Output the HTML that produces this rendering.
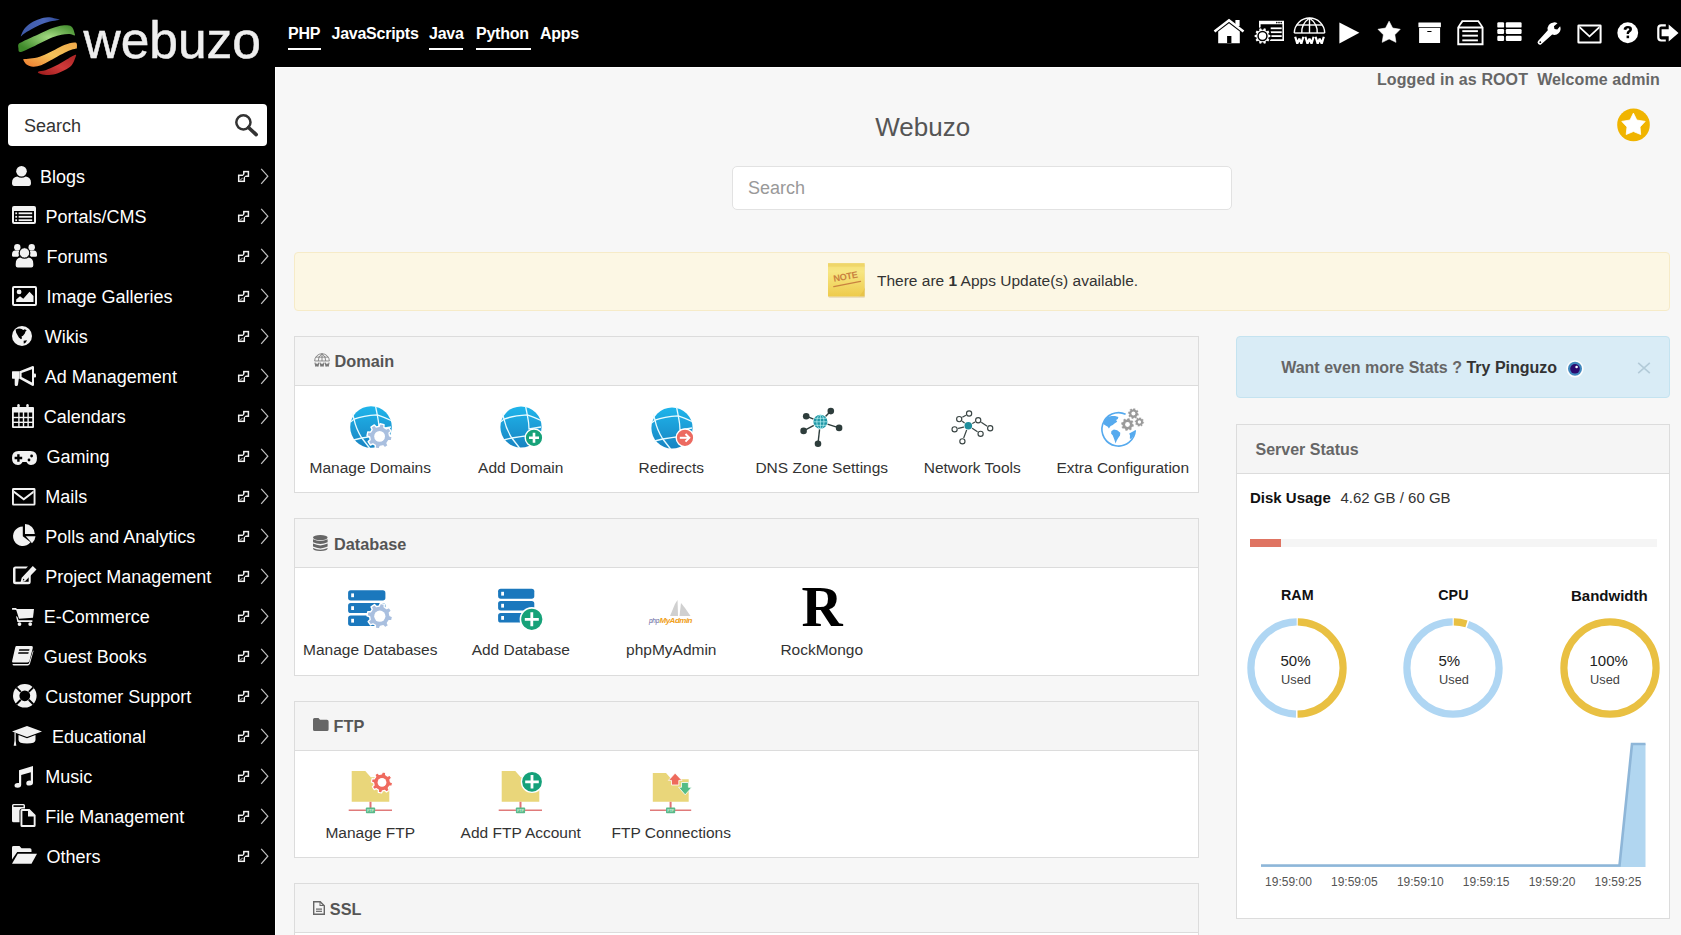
<!DOCTYPE html>
<html><head><meta charset="utf-8">
<style>
*{margin:0;padding:0;box-sizing:border-box}
html,body{width:1681px;height:935px;overflow:hidden;background:#f7f7f7;font-family:"Liberation Sans",sans-serif}
.a{position:absolute;overflow:visible}
.t{position:absolute;white-space:nowrap;line-height:1}
.nav{color:#fff;font-weight:bold;letter-spacing:-0.25px}
.ul{position:absolute;height:2px;background:#fff;top:48px}
.si{color:#fff;font-size:18px}
.panel{position:absolute;left:294px;width:905px;background:#fff;border:1px solid #dcdcdc}
.ph{height:49px;background:#f5f5f5;border-bottom:1px solid #dcdcdc}
.lbl{position:absolute;width:150px;text-align:center;font-size:15.5px;color:#333;line-height:1;white-space:nowrap}
</style></head><body>
<div class="a" style="left:0;top:0;width:1681px;height:67px;background:#000"></div>
<div class="a" style="left:0;top:67px;width:275px;height:868px;background:#000"></div>
<div class="a" style="left:275px;top:67px;width:1406px;height:868px;background:#f7f7f7;border-top:1px solid #fff;border-left:1px solid #fff"></div>

<svg class="a" style="left:12px;top:12px" width="70" height="68" viewBox="0 0 962 935"><defs><linearGradient id="lb" x1="0" y1="0" x2="1" y2="0"><stop offset="0" stop-color="#3e5aa8"/><stop offset="0.6" stop-color="#4a66b8"/><stop offset="1" stop-color="#2c4590"/></linearGradient><radialGradient id="lg" cx="0.55" cy="0.45" r="0.6"><stop offset="0" stop-color="#a6dc84"/><stop offset="1" stop-color="#3f8a2a"/></radialGradient><linearGradient id="lo" x1="0" y1="1" x2="1" y2="0"><stop offset="0" stop-color="#ef7a2e"/><stop offset="0.5" stop-color="#f3c35a"/><stop offset="1" stop-color="#f0a84a"/></linearGradient><linearGradient id="lr" x1="0" y1="1" x2="1" y2="0"><stop offset="0" stop-color="#9a1a1a"/><stop offset="0.5" stop-color="#d03a3a"/><stop offset="1" stop-color="#a82424"/></linearGradient></defs><path fill="url(#lb)" d="M125 320C132 303 148 258 170 230C192 202 225 172 260 150C295 128 340 108 380 95C420 82 457 71 500 72C543 73 617 94 640 100C663 106 660 105 640 110C620 115 563 121 520 132C477 143 423 160 380 178C337 196 297 221 260 242C223 263 182 287 160 302C138 317 131 329 125 332C119 335 118 337 125 320Z"/><path fill="url(#lg)" d="M90 440C100 424 122 419 150 405C178 391 218 374 260 355C302 336 357 310 400 290C443 270 480 251 520 235C560 219 600 204 640 195C680 186 728 180 760 183C792 186 813 192 830 212C847 232 857 282 862 300C867 318 872 322 860 322C848 322 820 304 790 302C760 300 718 304 680 312C642 320 603 330 560 347C517 364 467 390 420 412C373 434 322 462 280 482C238 502 200 521 170 532C140 543 114 553 100 548C86 543 90 518 88 500C86 482 80 456 90 440Z"/><path fill="url(#lo)" d="M160 650C175 646 213 646 250 640C287 634 335 629 380 615C425 601 473 578 520 555C567 532 615 501 660 480C705 459 753 440 790 430C827 420 865 413 882 423C899 433 892 477 892 490C892 503 899 495 880 502C861 509 817 517 780 532C743 547 703 569 660 592C617 615 563 649 520 672C477 695 438 719 400 732C362 745 323 754 290 752C257 750 222 737 200 722C178 707 165 674 158 662C151 650 145 654 160 650Z"/><path fill="url(#lr)" d="M360 820C373 812 420 813 460 800C500 787 553 763 600 740C647 717 695 685 740 660C785 635 851 591 872 588C893 585 875 616 866 640C857 664 844 705 820 732C796 759 757 782 720 802C683 822 642 841 600 852C558 863 507 868 470 867C433 866 398 855 380 847C362 839 347 828 360 820Z"/></svg>
<div class="t" style="left:83.5px;top:14.6px;font-size:51.5px;color:#eeeeee;-webkit-text-stroke:0.5px #eee">webuzo</div>
<div class="t nav" style="left:288.00px;top:26.06px;font-size:16px;">PHP</div>
<div class="t nav" style="left:331.50px;top:26.06px;font-size:16px;">JavaScripts</div>
<div class="t nav" style="left:429.00px;top:26.06px;font-size:16px;">Java</div>
<div class="t nav" style="left:476.00px;top:26.06px;font-size:16px;">Python</div>
<div class="t nav" style="left:540.00px;top:26.06px;font-size:16px;">Apps</div>
<div class="ul" style="left:288px;width:33px"></div><div class="ul" style="left:429px;width:34px"></div><div class="ul" style="left:476px;width:55px"></div>
<svg class="a" style="left:1213.0px;top:19.0px" width="32.0" height="26.0" viewBox="0 0 32.0 26.0" fill="#fff"><path fill="none" stroke="#fff" stroke-width="2.6" d="M1.5 12.5L16 1.3L30.5 12.5"/><rect x="22.4" y="1" width="4.2" height="6" /><path fill-rule="evenodd" d="M5.2 12.5L16 4.3L26.8 12.5V24.3H5.2ZM14.1 17.1V24.5H18.4V17.1Z"/></svg>
<svg class="a" style="left:1254.0px;top:20.0px" width="31.0" height="25.0" viewBox="0 0 31.0 25.0" fill="#fff"><path fill-rule="evenodd" d="M5 0.8H30V21H11.5V19.3H28.4V4.3H6.6V8.5H5Z"/><circle cx="22.8" cy="2.6" r="0.8" fill="#000"/><circle cx="25" cy="2.6" r="0.8" fill="#000"/><circle cx="27.2" cy="2.6" r="0.8" fill="#000"/><rect x="16.7" y="7.4" width="11" height="1.8"/><rect x="16.7" y="11.3" width="11" height="1.8"/><rect x="16.7" y="15.2" width="11" height="1.8"/><circle cx="8.5" cy="16" r="9" fill="#000"/><path d="M14.67 14.72L16.34 15.01L16.34 16.99L14.67 17.28L14.24 18.59L15.42 19.81L14.26 21.41L12.74 20.66L11.62 21.47L11.86 23.15L9.98 23.76L9.19 22.26L7.81 22.26L7.02 23.76L5.14 23.15L5.38 21.47L4.26 20.66L2.74 21.41L1.58 19.81L2.76 18.59L2.33 17.28L0.66 16.99L0.66 15.01L2.33 14.72L2.76 13.41L1.58 12.19L2.74 10.59L4.26 11.34L5.38 10.53L5.14 8.85L7.02 8.24L7.81 9.74L9.19 9.74L9.98 8.24L11.86 8.85L11.62 10.53L12.74 11.34L14.26 10.59L15.42 12.19L14.24 13.41Z"/><circle cx="8.5" cy="16" r="5.2" fill="#000"/><circle cx="8.5" cy="16" r="3.7"/></svg>
<svg class="a" style="left:1293.0px;top:17.0px" width="33.0" height="29.0" viewBox="0 0 33.0 29.0" fill="#fff"><g fill="none" stroke="#fff" stroke-width="1.4"><path d="M1.3 16A15.2 15 0 0 1 31.7 16"/><path d="M1.3 16H31.7"/><path d="M3.8 8H29.2"/><path d="M16.5 1V16"/><path d="M16.5 1Q8.2 7 8.8 16"/><path d="M16.5 1Q24.8 7 24.2 16"/></g><g fill="none" stroke="#fff" stroke-width="2.2" stroke-linejoin="bevel"><path d="M2.2 19.8L4.3 26.6L6.3 21.6L8.3 26.6L10.4 19.8"/><path d="M12.4 19.8L14.5 26.6L16.5 21.6L18.5 26.6L20.6 19.8"/><path d="M22.6 19.8L24.7 26.6L26.7 21.6L28.7 26.6L30.8 19.8"/></g></svg>
<svg class="a" style="left:1338.5px;top:21.5px" width="21.0" height="22.0" viewBox="0 0 21.0 22.0" fill="#fff"><path d="M0.4 0.4L20.4 10.7L0.4 21.4Z"/></svg>
<svg class="a" style="left:1376.5px;top:20.5px" width="24.0" height="22.0" viewBox="0 0 24.0 22.0" fill="#fff"><path stroke="#fff" stroke-width="0.6" stroke-linejoin="round" d="M12.10 0.20L15.63 7.05L23.23 8.28L17.81 13.75L18.98 21.37L12.10 17.90L5.22 21.37L6.39 13.75L0.97 8.28L8.57 7.05Z"/></svg>
<svg class="a" style="left:1417.5px;top:21.8px" width="23.5" height="21.5" viewBox="0 0 23.5 21.5" fill="#fff"><rect x="0.4" y="0.4" width="22.5" height="4.8" rx="0.4"/><path fill-rule="evenodd" d="M1.1 6.1H22.1V21.1H1.1ZM9.3 9V10.1H13.5V9Z"/></svg>
<svg class="a" style="left:1456.5px;top:19.8px" width="27.0" height="25.5" viewBox="0 0 27.0 25.5" fill="#fff"><path fill-rule="evenodd" d="M4.8 0.3H21.8L26.5 7.2V25.2H0.3V7.2ZM6 2L2.7 6.6H24.1L20.8 2ZM2.2 8.4V23.2H24.6V8.4Z"/><rect x="5.3" y="10.2" width="15.6" height="1.9"/><rect x="5.3" y="14.7" width="15.6" height="1.9"/><rect x="5.3" y="19.4" width="15.6" height="1.9"/></svg>
<svg class="a" style="left:1496.5px;top:22.0px" width="25.0" height="19.5" viewBox="0 0 25.0 19.5" fill="#fff"><rect x="0.3" y="0.2" width="6.8" height="5.4" rx="1.2"/><rect x="8.8" y="0.2" width="15.8" height="5.4" rx="1.2"/><rect x="0.3" y="7" width="6.8" height="5" rx="1.2"/><rect x="8.8" y="7" width="15.8" height="5" rx="1.2"/><rect x="0.3" y="13.8" width="6.8" height="5.2" rx="1.2"/><rect x="8.8" y="13.8" width="15.8" height="5.2" rx="1.2"/></svg>
<svg class="a" style="left:1537.0px;top:21.5px" width="23.5" height="23.0" viewBox="0 0 23.5 23.0" fill="#fff"><path fill-rule="evenodd" d="M16.6 0.4A6.3 6.3 0 0 1 20.5 1.3L16.9 4.2L17.5 7L20.3 7.6L23.1 4.3A6.3 6.3 0 0 1 15.2 12.6L4.3 22.2Q2.8 23.3 1.3 22Q-0.2 20.3 1.1 18.9L10.8 8.3A6.3 6.3 0 0 1 16.6 0.4ZM3.3 19.3A0.9 0.9 0 1 0 3.3 21.1A0.9 0.9 0 1 0 3.3 19.3Z"/></svg>
<svg class="a" style="left:1576.5px;top:23.5px" width="25.0" height="20.0" viewBox="0 0 25.0 20.0" fill="#fff"><path fill-rule="evenodd" d="M1.8 0.4H23.2Q24.6 0.4 24.6 1.8V18.2Q24.6 19.6 23.2 19.6H1.8Q0.4 19.6 0.4 18.2V1.8Q0.4 0.4 1.8 0.4ZM2.4 2.4V17.6H22.6V2.4Z"/><path d="M2.4 1.8L12.5 11.2L22.6 1.8V4.3L12.5 13.6L2.4 4.3Z"/></svg>
<svg class="a" style="left:1616.5px;top:21.8px" width="21.5" height="21.5" viewBox="0 0 21.5 21.5" fill="#fff"><circle cx="10.75" cy="10.75" r="10.4"/><path fill="#000" d="M6.6 7.6Q6.8 4 10.9 4Q15 4 15 7.2Q15 9.3 12.7 10.4Q12 10.8 12 12H9.6Q9.5 9.6 11 8.7Q12.4 8 12.3 7.2Q12.2 6.2 10.9 6.2Q9.4 6.2 9.3 8Z"/><rect fill="#000" x="9.6" y="13.6" width="2.5" height="2.6"/></svg>
<svg class="a" style="left:1657.3px;top:23.5px" width="22.0" height="18.0" viewBox="0 0 22.0 18.0" fill="#fff"><path fill="none" stroke="#fff" stroke-width="2.2" d="M8.8 1.3H4.2Q1.3 1.3 1.3 4.2V13.6Q1.3 16.5 4.2 16.5H8.8"/><path d="M4.6 5.3H11.7V0.4L21.5 9L11.7 17.6V12.3H4.6Z"/></svg>
<div class="a" style="left:8px;top:104px;width:259px;height:42px;background:#fff;border-radius:4px"></div>
<div class="t" style="left:24.00px;top:116.76px;font-size:18px;color:#333">Search</div>
<svg class="a" style="left:232px;top:111px" width="28" height="28" viewBox="0 0 28 28"><circle cx="11.4" cy="11.3" r="7.1" fill="none" stroke="#333" stroke-width="2.5"/><path d="M16.5 16.5L24.2 23.6" stroke="#333" stroke-width="3.6" stroke-linecap="round"/></svg>
<div class="t si" style="left:40.0px;top:167.96px">Blogs</div>
<svg class="a" style="left:238px;top:171px" width="11" height="11" viewBox="0 0 11 11"><rect x="5.8" y="0.6" width="4.6" height="4.6" fill="none" stroke="#f2f2f2" stroke-width="1.5"/><rect x="0.7" y="4.3" width="5.6" height="6" fill="#000" stroke="#f2f2f2" stroke-width="1.5"/><path d="M8.3 2.6L3.2 7.7" stroke="#000" stroke-width="1.6"/><path d="M2 9.3L4.6 6.8" stroke="#999" stroke-width="1.1"/></svg>
<svg class="a" style="left:260px;top:168px" width="9" height="17" viewBox="0 0 9 17"><path fill="none" stroke="#c0c0c0" stroke-width="1.25" d="M1.2 0.8L7.8 8.2L1.2 15.8"/></svg>
<div class="t si" style="left:45.5px;top:207.96px">Portals/CMS</div>
<svg class="a" style="left:238px;top:211px" width="11" height="11" viewBox="0 0 11 11"><rect x="5.8" y="0.6" width="4.6" height="4.6" fill="none" stroke="#f2f2f2" stroke-width="1.5"/><rect x="0.7" y="4.3" width="5.6" height="6" fill="#000" stroke="#f2f2f2" stroke-width="1.5"/><path d="M8.3 2.6L3.2 7.7" stroke="#000" stroke-width="1.6"/><path d="M2 9.3L4.6 6.8" stroke="#999" stroke-width="1.1"/></svg>
<svg class="a" style="left:260px;top:208px" width="9" height="17" viewBox="0 0 9 17"><path fill="none" stroke="#c0c0c0" stroke-width="1.25" d="M1.2 0.8L7.8 8.2L1.2 15.8"/></svg>
<div class="t si" style="left:46.5px;top:247.96px">Forums</div>
<svg class="a" style="left:238px;top:251px" width="11" height="11" viewBox="0 0 11 11"><rect x="5.8" y="0.6" width="4.6" height="4.6" fill="none" stroke="#f2f2f2" stroke-width="1.5"/><rect x="0.7" y="4.3" width="5.6" height="6" fill="#000" stroke="#f2f2f2" stroke-width="1.5"/><path d="M8.3 2.6L3.2 7.7" stroke="#000" stroke-width="1.6"/><path d="M2 9.3L4.6 6.8" stroke="#999" stroke-width="1.1"/></svg>
<svg class="a" style="left:260px;top:248px" width="9" height="17" viewBox="0 0 9 17"><path fill="none" stroke="#c0c0c0" stroke-width="1.25" d="M1.2 0.8L7.8 8.2L1.2 15.8"/></svg>
<div class="t si" style="left:46.5px;top:287.96px">Image Galleries</div>
<svg class="a" style="left:238px;top:291px" width="11" height="11" viewBox="0 0 11 11"><rect x="5.8" y="0.6" width="4.6" height="4.6" fill="none" stroke="#f2f2f2" stroke-width="1.5"/><rect x="0.7" y="4.3" width="5.6" height="6" fill="#000" stroke="#f2f2f2" stroke-width="1.5"/><path d="M8.3 2.6L3.2 7.7" stroke="#000" stroke-width="1.6"/><path d="M2 9.3L4.6 6.8" stroke="#999" stroke-width="1.1"/></svg>
<svg class="a" style="left:260px;top:288px" width="9" height="17" viewBox="0 0 9 17"><path fill="none" stroke="#c0c0c0" stroke-width="1.25" d="M1.2 0.8L7.8 8.2L1.2 15.8"/></svg>
<div class="t si" style="left:44.8px;top:327.96px">Wikis</div>
<svg class="a" style="left:238px;top:331px" width="11" height="11" viewBox="0 0 11 11"><rect x="5.8" y="0.6" width="4.6" height="4.6" fill="none" stroke="#f2f2f2" stroke-width="1.5"/><rect x="0.7" y="4.3" width="5.6" height="6" fill="#000" stroke="#f2f2f2" stroke-width="1.5"/><path d="M8.3 2.6L3.2 7.7" stroke="#000" stroke-width="1.6"/><path d="M2 9.3L4.6 6.8" stroke="#999" stroke-width="1.1"/></svg>
<svg class="a" style="left:260px;top:328px" width="9" height="17" viewBox="0 0 9 17"><path fill="none" stroke="#c0c0c0" stroke-width="1.25" d="M1.2 0.8L7.8 8.2L1.2 15.8"/></svg>
<div class="t si" style="left:44.8px;top:367.96px">Ad Management</div>
<svg class="a" style="left:238px;top:371px" width="11" height="11" viewBox="0 0 11 11"><rect x="5.8" y="0.6" width="4.6" height="4.6" fill="none" stroke="#f2f2f2" stroke-width="1.5"/><rect x="0.7" y="4.3" width="5.6" height="6" fill="#000" stroke="#f2f2f2" stroke-width="1.5"/><path d="M8.3 2.6L3.2 7.7" stroke="#000" stroke-width="1.6"/><path d="M2 9.3L4.6 6.8" stroke="#999" stroke-width="1.1"/></svg>
<svg class="a" style="left:260px;top:368px" width="9" height="17" viewBox="0 0 9 17"><path fill="none" stroke="#c0c0c0" stroke-width="1.25" d="M1.2 0.8L7.8 8.2L1.2 15.8"/></svg>
<div class="t si" style="left:43.8px;top:407.96px">Calendars</div>
<svg class="a" style="left:238px;top:411px" width="11" height="11" viewBox="0 0 11 11"><rect x="5.8" y="0.6" width="4.6" height="4.6" fill="none" stroke="#f2f2f2" stroke-width="1.5"/><rect x="0.7" y="4.3" width="5.6" height="6" fill="#000" stroke="#f2f2f2" stroke-width="1.5"/><path d="M8.3 2.6L3.2 7.7" stroke="#000" stroke-width="1.6"/><path d="M2 9.3L4.6 6.8" stroke="#999" stroke-width="1.1"/></svg>
<svg class="a" style="left:260px;top:408px" width="9" height="17" viewBox="0 0 9 17"><path fill="none" stroke="#c0c0c0" stroke-width="1.25" d="M1.2 0.8L7.8 8.2L1.2 15.8"/></svg>
<div class="t si" style="left:46.6px;top:447.96px">Gaming</div>
<svg class="a" style="left:238px;top:451px" width="11" height="11" viewBox="0 0 11 11"><rect x="5.8" y="0.6" width="4.6" height="4.6" fill="none" stroke="#f2f2f2" stroke-width="1.5"/><rect x="0.7" y="4.3" width="5.6" height="6" fill="#000" stroke="#f2f2f2" stroke-width="1.5"/><path d="M8.3 2.6L3.2 7.7" stroke="#000" stroke-width="1.6"/><path d="M2 9.3L4.6 6.8" stroke="#999" stroke-width="1.1"/></svg>
<svg class="a" style="left:260px;top:448px" width="9" height="17" viewBox="0 0 9 17"><path fill="none" stroke="#c0c0c0" stroke-width="1.25" d="M1.2 0.8L7.8 8.2L1.2 15.8"/></svg>
<div class="t si" style="left:45.2px;top:487.96px">Mails</div>
<svg class="a" style="left:238px;top:491px" width="11" height="11" viewBox="0 0 11 11"><rect x="5.8" y="0.6" width="4.6" height="4.6" fill="none" stroke="#f2f2f2" stroke-width="1.5"/><rect x="0.7" y="4.3" width="5.6" height="6" fill="#000" stroke="#f2f2f2" stroke-width="1.5"/><path d="M8.3 2.6L3.2 7.7" stroke="#000" stroke-width="1.6"/><path d="M2 9.3L4.6 6.8" stroke="#999" stroke-width="1.1"/></svg>
<svg class="a" style="left:260px;top:488px" width="9" height="17" viewBox="0 0 9 17"><path fill="none" stroke="#c0c0c0" stroke-width="1.25" d="M1.2 0.8L7.8 8.2L1.2 15.8"/></svg>
<div class="t si" style="left:45.2px;top:527.96px">Polls and Analytics</div>
<svg class="a" style="left:238px;top:531px" width="11" height="11" viewBox="0 0 11 11"><rect x="5.8" y="0.6" width="4.6" height="4.6" fill="none" stroke="#f2f2f2" stroke-width="1.5"/><rect x="0.7" y="4.3" width="5.6" height="6" fill="#000" stroke="#f2f2f2" stroke-width="1.5"/><path d="M8.3 2.6L3.2 7.7" stroke="#000" stroke-width="1.6"/><path d="M2 9.3L4.6 6.8" stroke="#999" stroke-width="1.1"/></svg>
<svg class="a" style="left:260px;top:528px" width="9" height="17" viewBox="0 0 9 17"><path fill="none" stroke="#c0c0c0" stroke-width="1.25" d="M1.2 0.8L7.8 8.2L1.2 15.8"/></svg>
<div class="t si" style="left:45.2px;top:567.96px">Project Management</div>
<svg class="a" style="left:238px;top:571px" width="11" height="11" viewBox="0 0 11 11"><rect x="5.8" y="0.6" width="4.6" height="4.6" fill="none" stroke="#f2f2f2" stroke-width="1.5"/><rect x="0.7" y="4.3" width="5.6" height="6" fill="#000" stroke="#f2f2f2" stroke-width="1.5"/><path d="M8.3 2.6L3.2 7.7" stroke="#000" stroke-width="1.6"/><path d="M2 9.3L4.6 6.8" stroke="#999" stroke-width="1.1"/></svg>
<svg class="a" style="left:260px;top:568px" width="9" height="17" viewBox="0 0 9 17"><path fill="none" stroke="#c0c0c0" stroke-width="1.25" d="M1.2 0.8L7.8 8.2L1.2 15.8"/></svg>
<div class="t si" style="left:43.8px;top:607.96px">E-Commerce</div>
<svg class="a" style="left:238px;top:611px" width="11" height="11" viewBox="0 0 11 11"><rect x="5.8" y="0.6" width="4.6" height="4.6" fill="none" stroke="#f2f2f2" stroke-width="1.5"/><rect x="0.7" y="4.3" width="5.6" height="6" fill="#000" stroke="#f2f2f2" stroke-width="1.5"/><path d="M8.3 2.6L3.2 7.7" stroke="#000" stroke-width="1.6"/><path d="M2 9.3L4.6 6.8" stroke="#999" stroke-width="1.1"/></svg>
<svg class="a" style="left:260px;top:608px" width="9" height="17" viewBox="0 0 9 17"><path fill="none" stroke="#c0c0c0" stroke-width="1.25" d="M1.2 0.8L7.8 8.2L1.2 15.8"/></svg>
<div class="t si" style="left:43.8px;top:647.96px">Guest Books</div>
<svg class="a" style="left:238px;top:651px" width="11" height="11" viewBox="0 0 11 11"><rect x="5.8" y="0.6" width="4.6" height="4.6" fill="none" stroke="#f2f2f2" stroke-width="1.5"/><rect x="0.7" y="4.3" width="5.6" height="6" fill="#000" stroke="#f2f2f2" stroke-width="1.5"/><path d="M8.3 2.6L3.2 7.7" stroke="#000" stroke-width="1.6"/><path d="M2 9.3L4.6 6.8" stroke="#999" stroke-width="1.1"/></svg>
<svg class="a" style="left:260px;top:648px" width="9" height="17" viewBox="0 0 9 17"><path fill="none" stroke="#c0c0c0" stroke-width="1.25" d="M1.2 0.8L7.8 8.2L1.2 15.8"/></svg>
<div class="t si" style="left:45.2px;top:687.96px">Customer Support</div>
<svg class="a" style="left:238px;top:691px" width="11" height="11" viewBox="0 0 11 11"><rect x="5.8" y="0.6" width="4.6" height="4.6" fill="none" stroke="#f2f2f2" stroke-width="1.5"/><rect x="0.7" y="4.3" width="5.6" height="6" fill="#000" stroke="#f2f2f2" stroke-width="1.5"/><path d="M8.3 2.6L3.2 7.7" stroke="#000" stroke-width="1.6"/><path d="M2 9.3L4.6 6.8" stroke="#999" stroke-width="1.1"/></svg>
<svg class="a" style="left:260px;top:688px" width="9" height="17" viewBox="0 0 9 17"><path fill="none" stroke="#c0c0c0" stroke-width="1.25" d="M1.2 0.8L7.8 8.2L1.2 15.8"/></svg>
<div class="t si" style="left:52.0px;top:727.96px">Educational</div>
<svg class="a" style="left:238px;top:731px" width="11" height="11" viewBox="0 0 11 11"><rect x="5.8" y="0.6" width="4.6" height="4.6" fill="none" stroke="#f2f2f2" stroke-width="1.5"/><rect x="0.7" y="4.3" width="5.6" height="6" fill="#000" stroke="#f2f2f2" stroke-width="1.5"/><path d="M8.3 2.6L3.2 7.7" stroke="#000" stroke-width="1.6"/><path d="M2 9.3L4.6 6.8" stroke="#999" stroke-width="1.1"/></svg>
<svg class="a" style="left:260px;top:728px" width="9" height="17" viewBox="0 0 9 17"><path fill="none" stroke="#c0c0c0" stroke-width="1.25" d="M1.2 0.8L7.8 8.2L1.2 15.8"/></svg>
<div class="t si" style="left:45.2px;top:767.96px">Music</div>
<svg class="a" style="left:238px;top:771px" width="11" height="11" viewBox="0 0 11 11"><rect x="5.8" y="0.6" width="4.6" height="4.6" fill="none" stroke="#f2f2f2" stroke-width="1.5"/><rect x="0.7" y="4.3" width="5.6" height="6" fill="#000" stroke="#f2f2f2" stroke-width="1.5"/><path d="M8.3 2.6L3.2 7.7" stroke="#000" stroke-width="1.6"/><path d="M2 9.3L4.6 6.8" stroke="#999" stroke-width="1.1"/></svg>
<svg class="a" style="left:260px;top:768px" width="9" height="17" viewBox="0 0 9 17"><path fill="none" stroke="#c0c0c0" stroke-width="1.25" d="M1.2 0.8L7.8 8.2L1.2 15.8"/></svg>
<div class="t si" style="left:45.2px;top:807.96px">File Management</div>
<svg class="a" style="left:238px;top:811px" width="11" height="11" viewBox="0 0 11 11"><rect x="5.8" y="0.6" width="4.6" height="4.6" fill="none" stroke="#f2f2f2" stroke-width="1.5"/><rect x="0.7" y="4.3" width="5.6" height="6" fill="#000" stroke="#f2f2f2" stroke-width="1.5"/><path d="M8.3 2.6L3.2 7.7" stroke="#000" stroke-width="1.6"/><path d="M2 9.3L4.6 6.8" stroke="#999" stroke-width="1.1"/></svg>
<svg class="a" style="left:260px;top:808px" width="9" height="17" viewBox="0 0 9 17"><path fill="none" stroke="#c0c0c0" stroke-width="1.25" d="M1.2 0.8L7.8 8.2L1.2 15.8"/></svg>
<div class="t si" style="left:46.6px;top:847.96px">Others</div>
<svg class="a" style="left:238px;top:851px" width="11" height="11" viewBox="0 0 11 11"><rect x="5.8" y="0.6" width="4.6" height="4.6" fill="none" stroke="#f2f2f2" stroke-width="1.5"/><rect x="0.7" y="4.3" width="5.6" height="6" fill="#000" stroke="#f2f2f2" stroke-width="1.5"/><path d="M8.3 2.6L3.2 7.7" stroke="#000" stroke-width="1.6"/><path d="M2 9.3L4.6 6.8" stroke="#999" stroke-width="1.1"/></svg>
<svg class="a" style="left:260px;top:848px" width="9" height="17" viewBox="0 0 9 17"><path fill="none" stroke="#c0c0c0" stroke-width="1.25" d="M1.2 0.8L7.8 8.2L1.2 15.8"/></svg>
<svg class="a" style="left:12.0px;top:166.0px" width="19.0" height="20.0" viewBox="0 0 19.0 20.0" fill="#f2f2f2"><circle cx="9.5" cy="5.3" r="5.3"/><path d="M0 17 Q0 11.2 5.2 10.6 Q9.5 13 13.8 10.6 Q19 11.2 19 17 Q19 20 16.8 20 H2.2 Q0 20 0 17Z"/></svg>
<svg class="a" style="left:12.0px;top:206.0px" width="24.0" height="18.0" viewBox="0 0 24.0 18.0" fill="#f2f2f2"><path fill-rule="evenodd" d="M2 0h20a2 2 0 0 1 2 2v14a2 2 0 0 1-2 2H2a2 2 0 0 1-2-2V2a2 2 0 0 1 2-2zM2 5v11h20V5z"/><rect x="3.3" y="6.4" width="1.8" height="1.8"/><rect x="6.6" y="6.4" width="13.6" height="1.8"/><rect x="3.3" y="9.9" width="1.8" height="1.8"/><rect x="6.6" y="9.9" width="13.6" height="1.8"/><rect x="3.3" y="13.3" width="1.8" height="1.8"/><rect x="6.6" y="13.3" width="13.6" height="1.8"/></svg>
<svg class="a" style="left:12.0px;top:244.0px" width="25.0" height="24.0" viewBox="0 0 25.0 24.0" fill="#f2f2f2"><circle cx="5.3" cy="3.2" r="3.2"/><circle cx="19.7" cy="3.2" r="3.2"/><path d="M0 10.5Q0 6.6 3.3 6.6H7.5Q6.2 8.5 7 11.5L6 12.8H1.5Q0 12.8 0 11.5Z"/><path d="M25 10.5Q25 6.6 21.7 6.6H17.5Q18.8 8.5 18 11.5L19 12.8H23.5Q25 12.8 25 11.5Z"/><circle cx="12.5" cy="8.9" r="5.2" stroke="#000" stroke-width="1"/><path d="M3.7 20Q3.7 14.2 8.2 13.6Q12.5 16 16.8 13.6Q21.3 14.2 21.3 20V21.6Q21.3 23.6 19.3 23.6H5.7Q3.7 23.6 3.7 21.6Z"/></svg>
<svg class="a" style="left:12.0px;top:286.0px" width="25.0" height="20.0" viewBox="0 0 25.0 20.0" fill="#f2f2f2"><path fill-rule="evenodd" d="M2 0h21a2 2 0 0 1 2 2v16a2 2 0 0 1-2 2H2a2 2 0 0 1-2-2V2a2 2 0 0 1 2-2zM2 2v16h21V2z"/><circle cx="7.1" cy="5.9" r="2.4"/><path d="M4.2 16V13.5L8 10.3L11.3 12.8L17.5 5.8L21.5 10V16Z"/></svg>
<svg class="a" style="left:12.4px;top:326.0px" width="20.0" height="20.0" viewBox="0 0 20.0 20.0" fill="#f2f2f2"><circle cx="10" cy="10" r="10"/><path fill="#000" d="M3.6 3.6L5.5 2.7L7.6 2.6L9.6 3L11.3 3.9L12.7 3.2L14.7 4.3L13.5 5.4L12.8 7.6L11 9.8L9.5 10.5L10 12.2L9 13.3L6.9 11.4L5.2 8.6L4.2 6.8Z"/><path fill="#000" d="M11.6 14.7L15 14.3L13.8 16.6L11.8 17.8Z"/></svg>
<svg class="a" style="left:12.0px;top:366.0px" width="24.0" height="20.0" viewBox="0 0 24.0 20.0" fill="#f2f2f2"><path d="M0.5 5.2H7.5V12.8H6.8L6 18.5Q5.8 20 4.5 20H4Q2.7 20 2.7 18.5V12.8H0.5Q0 12.8 0 12V6Q0 5.2 0.5 5.2Z"/><path fill-rule="evenodd" d="M7.5 5.2L20.6 0L22 0.5V19.5L20.6 20L7.5 12.8ZM9.6 7L9.6 11L20 16.5V3.3Z"/><rect x="21.5" y="7.5" width="2.5" height="4" rx="1"/></svg>
<svg class="a" style="left:12.0px;top:404.0px" width="22.0" height="24.0" viewBox="0 0 22.0 24.0" fill="#f2f2f2"><path fill-rule="evenodd" d="M1 3H21Q22 3 22 4V23Q22 24 21 24H1Q0 24 0 23V4Q0 3 1 3ZM1.8 8.5V22.2H20.2V8.5Z"/><rect x="5.3" y="0" width="2.4" height="6" rx="1.2"/><rect x="14.3" y="0" width="2.4" height="6" rx="1.2"/><rect x="1" y="12.8" width="20" height="1.4"/><rect x="1" y="17.6" width="20" height="1.4"/><rect x="6.2" y="8" width="1.4" height="15"/><rect x="10.8" y="8" width="1.4" height="15"/><rect x="15.4" y="8" width="1.4" height="15"/></svg>
<svg class="a" style="left:12.0px;top:450.5px" width="25.0" height="14.0" viewBox="0 0 25.0 14.0" fill="#f2f2f2"><path d="M6.5 0H18.5Q25 0 25 7Q25 14 19 14Q16 14 14.5 11H10.5Q9 14 6 14Q0 14 0 7Q0 0 6.5 0Z"/><path fill="#000" d="M5.2 3.2H7.6V5.8H10.2V8.2H7.6V10.8H5.2V8.2H2.6V5.8H5.2Z"/><circle fill="#000" cx="19.6" cy="5" r="1.4"/><circle fill="#000" cx="17" cy="9" r="1.4"/></svg>
<svg class="a" style="left:12.3px;top:488.0px" width="23.5" height="17.6" viewBox="0 0 23.5 17.6" fill="#f2f2f2"><path fill-rule="evenodd" d="M1.5 0H22Q23.5 0 23.5 1.5V16.1Q23.5 17.6 22 17.6H1.5Q0 17.6 0 16.1V1.5Q0 0 1.5 0ZM1.9 1.9V15.7H21.6V1.9Z"/><path d="M1.9 2.5L11.75 10L21.6 2.5V4.9L11.75 12.4L1.9 4.9Z"/></svg>
<svg class="a" style="left:12.6px;top:524.0px" width="22.5" height="22.0" viewBox="0 0 22.5 22.0" fill="#f2f2f2"><path d="M9.8 2.4A9.8 9.8 0 1 0 17.5 18.3L9.8 12.2Z"/><path d="M12 0A10 10 0 0 1 21.8 10H12Z"/><path d="M12.8 12.2H22.5A10 10 0 0 1 19 19.2Z"/></svg>
<svg class="a" style="left:12.6px;top:566.0px" width="23.5" height="18.2" viewBox="0 0 23.5 18.2" fill="#f2f2f2"><path fill-rule="evenodd" d="M2.5 0.5H15L13 2.5H2.5V15.7H15.7V10.5L17.7 8.5V15.7Q17.7 18.2 15.2 18.2H2.5Q0 18.2 0 15.7V3Q0 0.5 2.5 0.5Z"/><path fill-rule="evenodd" d="M19.8 0L23.5 3.6L12 15.2L7.5 16.5L8.7 11.8ZM10.4 12.6L9.8 14.5L11.6 14Z"/></svg>
<svg class="a" style="left:12.3px;top:608.0px" width="22.0" height="18.0" viewBox="0 0 22.0 18.0" fill="#f2f2f2"><path d="M0 0H3.6Q4.4 0 4.6 0.8L5 2.2Z" /><rect x="0" y="0" width="4.2" height="1.8" rx="0.6"/><path d="M3.9 1.1H22L21 9.8L7 10.8Z"/><path d="M5.5 9L6.6 12.2H20.4V13.9H5.4L4 8Z"/><circle cx="7.5" cy="16.1" r="1.9"/><circle cx="18.2" cy="16.1" r="1.9"/></svg>
<svg class="a" style="left:12.3px;top:646.0px" width="21.5" height="19.5" viewBox="0 0 21.5 19.5" fill="#f2f2f2"><path d="M4.5 0H19.5Q21.3 0 20.8 2L17.5 14.8Q17 16.5 15.3 16.5H0.8Q-0.3 16.5 0.2 14.8L3.3 1.3Q3.6 0 4.5 0Z"/><path fill="#000" d="M7.3 3.2H17.5L17.1 4.7H6.9ZM6.5 6.3H16.7L16.3 7.8H6.1Z"/><path d="M21 4.5L21.5 5L18 17.5Q17.5 19.5 15.5 19.5H2Q0.5 19.5 0.5 18H15.8Q16.8 18 17.1 16.8Z"/></svg>
<svg class="a" style="left:12.6px;top:684.0px" width="23.6" height="23.6" viewBox="0 0 23.6 23.6" fill="#f2f2f2"><circle cx="11.8" cy="11.8" r="11.8"/><circle cx="11.8" cy="11.8" r="5.4" fill="#000"/><g stroke="#000" stroke-width="1.9"><path d="M3.3 3.3L7.8 7.8"/><path d="M20.3 3.3L15.8 7.8"/><path d="M3.3 20.3L7.8 15.8"/><path d="M20.3 20.3L15.8 15.8"/></g><circle cx="11.8" cy="11.8" r="9.9" fill="none" stroke="%s" stroke-width="0"/></svg>
<svg class="a" style="left:12.2px;top:726.0px" width="30.0" height="19.8" viewBox="0 0 30.0 19.8" fill="#f2f2f2"><path d="M15 0L30 5.5L15 11L0 5.5Z"/><path d="M6.5 9L15 12.3L23.5 9V14Q23.5 17.5 15 17.5Q6.5 17.5 6.5 14Z"/><path d="M2.5 6.5L3.7 7V14.8L4.3 19.8H1.7L2.5 14.8Z"/></svg>
<svg class="a" style="left:12.2px;top:765.7px" width="21.0" height="21.8" viewBox="0 0 21.0 21.8" fill="#f2f2f2"><path d="M7 4.3L21 0V16.8Q21 19.6 17.5 19.6Q14.3 19.6 14.3 17.4Q14.3 14.6 17.6 14.6Q18.3 14.6 18.8 14.8V6.2L9.2 8.9V18.8Q9.2 21.8 5.5 21.8Q2.5 21.8 2.5 19.6Q2.5 16.9 5.8 16.9Q6.5 16.9 7 17.1Z"/></svg>
<svg class="a" style="left:12.2px;top:804.3px" width="23.6" height="23.0" viewBox="0 0 23.6 23.0" fill="#f2f2f2"><path d="M1.5 0H11.5Q13 0 13 1.5V4.5H10Q7.5 4.5 7.5 7V18.3H1.5Q0 18.3 0 16.8V1.5Q0 0 1.5 0Z"/><path fill-rule="evenodd" d="M10 5H17.5L23.6 11V21.5Q23.6 23 22.1 23H10Q8.5 23 8.5 21.5V6.5Q8.5 5 10 5ZM10.4 6.9V21.1H21.7V12.5H16V6.9Z"/><rect x="1.5" y="1.3" width="10" height="1.6" fill="#000"/></svg>
<svg class="a" style="left:12.2px;top:846.0px" width="25.0" height="17.8" viewBox="0 0 25.0 17.8" fill="#f2f2f2"><path d="M0 1.5Q0 0 1.5 0H7.5L9.5 2.3H18Q19.5 2.3 19.5 3.8V6H5.2L0 13.5Z"/><path d="M5.8 7.8H25L19.5 17.8H0Z"/></svg>
<div class="t" style="left:1377.00px;top:72.06px;font-size:16px;font-weight:bold;color:#666;letter-spacing:0.1px">Logged in as ROOT&nbsp; Welcome admin</div>
<div class="t" style="left:875.20px;top:113.89px;font-size:26px;color:#555">Webuzo</div>
<svg class="a" style="left:1616px;top:108px" width="35" height="35" viewBox="0 0 35 35"><circle cx="17.5" cy="16.9" r="16.3" fill="#f0b400"/><path fill="#fff" stroke="#fff" stroke-width="0.8" stroke-linejoin="round" d="M17.4 5.1L20.8 12.0L29.2 13.4L24.0 19.0L24.7 26.5L17.4 23.5L10.2 26.5L11.0 19.0L5.8 13.4L14.0 12.0Z"/></svg>
<div class="a" style="left:732px;top:166px;width:500px;height:44px;background:#fff;border:1px solid #e2e2e2;border-radius:5px"></div>
<div class="t" style="left:748.00px;top:178.66px;font-size:18px;color:#999">Search</div>
<div class="a" style="left:294px;top:252px;width:1376px;height:59px;background:#fcf7e4;border:1px solid #f6ebc8;border-radius:4px"></div>
<svg class="a" style="left:827px;top:262px" width="40" height="37" viewBox="0 0 40 37"><defs><linearGradient id="ny" x1="0" y1="0" x2="0" y2="1"><stop offset="0" stop-color="#f4de74"/><stop offset="0.25" stop-color="#f7e682"/><stop offset="1" stop-color="#eecb4c"/></linearGradient></defs><rect x="1.5" y="2.5" width="36.5" height="33.5" rx="1.5" fill="#d9c8a0" opacity="0.5"/><path d="M1 1.2H37.6V27Q37 32 31 34.4H1Z" fill="url(#ny)"/><path d="M31 34.4Q36.5 31 37.6 25.5V34.4Z" fill="#e8c44a"/><rect x="1" y="1.2" width="36.6" height="3.5" fill="#ecd264" opacity="0.7"/><text x="7" y="19.8" transform="rotate(-10 7 19.8)" font-family="Liberation Sans" font-weight="bold" font-size="9.2" fill="#c98240" letter-spacing="-0.3">NOTE</text><path d="M6.8 24.6Q20 22 33.5 19.3" stroke="#c98240" stroke-width="1.3" fill="none" stroke-linecap="round"/></svg>
<div class="t" style="left:877.00px;top:272.88px;font-size:15.5px;color:#333">There are <b>1</b> Apps Update(s) available.</div>
<div class="panel" style="top:336px;height:157px"><div class="ph"></div></div>
<div class="panel" style="top:518px;height:158px"><div class="ph"></div></div>
<div class="panel" style="top:701px;height:157px"><div class="ph"></div></div>
<div class="panel" style="top:883px;height:157px"><div class="ph"></div></div>
<div class="t" style="left:334.50px;top:353.30px;font-size:16.3px;font-weight:bold;color:#555">Domain</div>
<div class="t" style="left:334.00px;top:535.70px;font-size:16.3px;font-weight:bold;color:#555">Database</div>
<div class="t" style="left:333.50px;top:718.40px;font-size:16.3px;font-weight:bold;color:#555">FTP</div>
<div class="t" style="left:329.80px;top:900.80px;font-size:16.3px;font-weight:bold;color:#555">SSL</div>
<svg class="a" style="left:313.5px;top:352.8px" width="16" height="14.5" viewBox="0 0 33 29"><g fill="none" stroke="#777" stroke-width="1.7"><path d="M1.3 16A15.2 15 0 0 1 31.7 16"/><path d="M1.3 16H31.7"/><path d="M3.8 8H29.2"/><path d="M16.5 1V16"/><path d="M16.5 1Q8.2 7 8.8 16"/><path d="M16.5 1Q24.8 7 24.2 16"/></g><g fill="none" stroke="#777" stroke-width="2.3" stroke-linejoin="bevel"><path d="M2 19.5L4 27.5L6 21.5L8 27.5L10 19.5"/><path d="M12.5 19.5L14.5 27.5L16.5 21.5L18.5 27.5L20.5 19.5"/><path d="M23 19.5L25 27.5L27 21.5L29 27.5L31 19.5"/></g></svg>
<svg class="a" style="left:313px;top:535px" width="14.6" height="16" viewBox="0 0 14.6 16" fill="#666"><ellipse cx="7.3" cy="2.6" rx="7.3" ry="2.6"/><path d="M0 4.2Q7.3 7.8 14.6 4.2V7.2Q7.3 10.8 0 7.2Z"/><path d="M0 8.6Q7.3 12.2 14.6 8.6V11.6Q7.3 15.2 0 11.6Z"/><path d="M0 13Q7.3 16.6 14.6 13V13.6Q14.6 16 7.3 16Q0 16 0 13.6Z"/></svg>
<svg class="a" style="left:313px;top:717.8px" width="15.6" height="13" viewBox="0 0 15.6 13" fill="#666"><path d="M1.5 0H5.5L7 1.8H14Q15.6 1.8 15.6 3.4V11.4Q15.6 13 14 13H1.6Q0 13 0 11.4V1.5Q0 0 1.5 0Z"/></svg>
<svg class="a" style="left:313px;top:901px" width="12" height="14" viewBox="0 0 12 14"><path fill="none" stroke="#666" stroke-width="1.4" d="M0.7 0.7H7.2L11.3 4.8V13.3H0.7Z"/><path fill="#666" d="M6.5 0.7H7.5V4H11V5H6.5Z"/><rect x="3" y="7.5" width="6" height="1.2" fill="#666"/><rect x="3" y="9.7" width="6" height="1.2" fill="#666"/></svg>
<div class="lbl" style="left:295.25px;top:459.88px">Manage Domains</div>
<div class="lbl" style="left:445.75px;top:459.88px">Add Domain</div>
<div class="lbl" style="left:596.25px;top:459.88px">Redirects</div>
<div class="lbl" style="left:746.75px;top:459.88px">DNS Zone Settings</div>
<div class="lbl" style="left:897.25px;top:459.88px">Network Tools</div>
<div class="lbl" style="left:1047.75px;top:459.88px">Extra Configuration</div>
<div class="lbl" style="left:295.25px;top:641.88px">Manage Databases</div>
<div class="lbl" style="left:445.75px;top:641.88px">Add Database</div>
<div class="lbl" style="left:596.25px;top:641.88px">phpMyAdmin</div>
<div class="lbl" style="left:746.75px;top:641.88px">RockMongo</div>
<div class="lbl" style="left:295.25px;top:824.88px">Manage FTP</div>
<div class="lbl" style="left:445.75px;top:824.88px">Add FTP Account</div>
<div class="lbl" style="left:596.25px;top:824.88px">FTP Connections</div>
<svg class="a" style="left:348.50px;top:405.00px;" width="44" height="44" viewBox="0 0 44 44"><defs><linearGradient id="gg0" x1="0" y1="0" x2="0" y2="1"><stop offset="0" stop-color="#1fb5eb"/><stop offset="1" stop-color="#1884c2"/></linearGradient></defs><circle cx="22" cy="22" r="20.8" fill="url(#gg0)"/><g fill="none" stroke="#e8fbff" stroke-width="1.3"><path d="M1.5 17Q4 15 5 14.2Q14 10.5 28.3 9.8Q35 12 42 15.5"/><path d="M28.3 9.8L26.5 1.2"/><path d="M5 14.2L3.5 8.5"/><path d="M5 14.2Q7 24 12.8 33L20.6 43"/><path d="M12.8 33L4.5 35"/><path d="M12.8 33Q22 31.5 30 30.5"/><path d="M28.3 9.8Q30 18 30 24L42 22"/></g></svg>
<svg class="a" style="left:366.00px;top:422.00px;" width="28" height="28" viewBox="0 0 28 28"><path fill="#a9bfdf" stroke="#fff" stroke-width="1.4" stroke-linejoin="round" d="M23.59 13.88L26.19 14.83L25.40 18.82L22.63 18.70L21.03 21.09L22.20 23.61L18.82 25.87L16.94 23.83L14.12 24.39L13.17 26.99L9.18 26.20L9.30 23.43L6.91 21.83L4.39 23.00L2.13 19.62L4.17 17.74L3.61 14.92L1.01 13.97L1.80 9.98L4.57 10.10L6.17 7.71L5.00 5.19L8.38 2.93L10.26 4.97L13.08 4.41L14.03 1.81L18.02 2.60L17.90 5.37L20.29 6.97L22.81 5.80L25.07 9.18L23.03 11.06Z"/><circle cx="13.60" cy="14.40" r="5.40" fill="#fff"/></svg>
<svg class="a" style="left:498.70px;top:405.20px;" width="44" height="44" viewBox="0 0 44 44"><defs><linearGradient id="gg1" x1="0" y1="0" x2="0" y2="1"><stop offset="0" stop-color="#1fb5eb"/><stop offset="1" stop-color="#1884c2"/></linearGradient></defs><circle cx="22" cy="22" r="20.6" fill="url(#gg1)"/><g fill="none" stroke="#e8fbff" stroke-width="1.3"><path d="M1.5 17Q4 15 5 14.2Q14 10.5 28.3 9.8Q35 12 42 15.5"/><path d="M28.3 9.8L26.5 1.2"/><path d="M5 14.2L3.5 8.5"/><path d="M5 14.2Q7 24 12.8 33L20.6 43"/><path d="M12.8 33L4.5 35"/><path d="M12.8 33Q22 31.5 30 30.5"/><path d="M28.3 9.8Q30 18 30 24L42 22"/></g></svg>
<svg class="a" style="left:524px;top:428px" width="20" height="20" viewBox="0 0 20 20"><circle cx="10" cy="9.8" r="8.8" fill="#17a279" stroke="#fff" stroke-width="1.4"/><path d="M10 4.8V14.8M5 9.8H15" stroke="#fff" stroke-width="2.6"/></svg>
<svg class="a" style="left:649.50px;top:405.50px;" width="44" height="44" viewBox="0 0 44 44"><defs><linearGradient id="gg2" x1="0" y1="0" x2="0" y2="1"><stop offset="0" stop-color="#1fb5eb"/><stop offset="1" stop-color="#1884c2"/></linearGradient></defs><circle cx="22" cy="22" r="20.6" fill="url(#gg2)"/><g fill="none" stroke="#e8fbff" stroke-width="1.3"><path d="M1.5 17Q4 15 5 14.2Q14 10.5 28.3 9.8Q35 12 42 15.5"/><path d="M28.3 9.8L26.5 1.2"/><path d="M5 14.2L3.5 8.5"/><path d="M5 14.2Q7 24 12.8 33L20.6 43"/><path d="M12.8 33L4.5 35"/><path d="M12.8 33Q22 31.5 30 30.5"/><path d="M28.3 9.8Q30 18 30 24L42 22"/></g></svg>
<svg class="a" style="left:675px;top:428px" width="20" height="20" viewBox="0 0 20 20"><circle cx="10" cy="9.8" r="8.8" fill="#ec6a60" stroke="#fff" stroke-width="1.4"/><path d="M4.8 9.8H13.5" stroke="#fff" stroke-width="2"/><path d="M10.5 6L14.3 9.8L10.5 13.6" fill="none" stroke="#fff" stroke-width="2"/></svg>
<svg class="a" style="left:798.00px;top:406.00px;" width="46" height="42" viewBox="0 0 46 42"><path d="M22.4 15.8L8.2 10.2" stroke="#2e3d3c" stroke-width="1.4"/><circle cx="8.2" cy="10.2" r="3.3" fill="#2e3d3c"/><path d="M22.4 15.8L32.8 5.1" stroke="#2e3d3c" stroke-width="1.4"/><circle cx="32.8" cy="5.1" r="3.3" fill="#2e3d3c"/><path d="M22.4 15.8L5.6 24.9" stroke="#2e3d3c" stroke-width="1.4"/><circle cx="5.6" cy="24.9" r="3.3" fill="#2e3d3c"/><path d="M22.4 15.8L41.1 21.9" stroke="#2e3d3c" stroke-width="1.4"/><circle cx="41.1" cy="21.9" r="3.3" fill="#2e3d3c"/><path d="M22.4 15.8L20.0 37.7" stroke="#2e3d3c" stroke-width="1.4"/><circle cx="20.0" cy="37.7" r="3.3" fill="#2e3d3c"/><circle cx="22.4" cy="15.8" r="7.6" fill="#fff"/><circle cx="22.4" cy="15.8" r="7" fill="#1f97a6"/><g stroke="#bff3f7" stroke-width="0.7" fill="none"><path d="M15.4 15.8H29.4"/><path d="M16.4 12.3H28.4"/><path d="M16.4 19.3H28.4"/><path d="M22.4 8.8V22.8"/><ellipse cx="22.4" cy="15.8" rx="3.6" ry="7"/></g></svg>
<svg class="a" style="left:948.00px;top:408.00px;" width="48" height="40" viewBox="0 0 48 40"><path d="M20.3 17.8L11.2 11.1" stroke="#3a4544" stroke-width="1.2"/><path d="M11.2 11.1L21.1 5.5" stroke="#3a4544" stroke-width="1.2"/><path d="M20.3 17.8L30.2 12.2" stroke="#3a4544" stroke-width="1.2"/><path d="M30.2 12.2L42.2 20.2" stroke="#3a4544" stroke-width="1.2"/><path d="M20.3 17.8L6.6 21.3" stroke="#3a4544" stroke-width="1.2"/><path d="M20.3 17.8L32.6 25.8" stroke="#3a4544" stroke-width="1.2"/><path d="M20.3 17.8L14.4 33.3" stroke="#3a4544" stroke-width="1.2"/><circle cx="11.2" cy="11.1" r="3.6" fill="#fff"/><circle cx="11.2" cy="11.1" r="2.6" fill="#fff" stroke="#3a4544" stroke-width="1.15"/><circle cx="21.1" cy="5.5" r="3.6" fill="#fff"/><circle cx="21.1" cy="5.5" r="2.6" fill="#fff" stroke="#3a4544" stroke-width="1.15"/><circle cx="30.2" cy="12.2" r="3.6" fill="#fff"/><circle cx="30.2" cy="12.2" r="2.6" fill="#fff" stroke="#3a4544" stroke-width="1.15"/><circle cx="42.2" cy="20.2" r="3.6" fill="#fff"/><circle cx="42.2" cy="20.2" r="2.6" fill="#fff" stroke="#3a4544" stroke-width="1.15"/><circle cx="6.6" cy="21.3" r="3.6" fill="#fff"/><circle cx="6.6" cy="21.3" r="2.6" fill="#fff" stroke="#3a4544" stroke-width="1.15"/><circle cx="32.6" cy="25.8" r="3.6" fill="#fff"/><circle cx="32.6" cy="25.8" r="2.6" fill="#fff" stroke="#3a4544" stroke-width="1.15"/><circle cx="14.4" cy="33.3" r="3.6" fill="#fff"/><circle cx="14.4" cy="33.3" r="2.6" fill="#fff" stroke="#3a4544" stroke-width="1.15"/><circle cx="20.3" cy="17.8" r="4.6" fill="#fff"/><circle cx="20.3" cy="17.8" r="3.8" fill="#1f8e9c"/></svg>
<svg class="a" style="left:1098.00px;top:404.00px;" width="50" height="46" viewBox="0 0 50 46"><path d="M27.6 10.2A16.7 16.7 0 1 0 37.3 26.3" fill="none" stroke="#56aaee" stroke-width="1.6"/><path fill="#56aaee" d="M1103.3 423.9L1104.7 420.0L1107.8 416.7L1111.7 415.9L1115.0 416.1L1118.4 417.0L1117.8 418.9L1116.1 420.0L1117.2 421.7L1114.5 423.4L1112.8 425.0L1110.6 426.1L1108.9 428.4L1107.8 426.7L1105.6 425.6 Z" transform="translate(-1098,-404)"/><path fill="#56aaee" d="M1111.4 431.1L1113.9 429.5L1117.2 430.3L1120.3 432.8L1120.0 435.6L1118.4 437.8L1116.7 440.6L1115.6 443.4L1114.5 440.0L1112.8 435.6L1111.1 433.4 Z" transform="translate(-1098,-404)"/><path fill="#56aaee" d="M1129.2 433.4L1133.9 431.1L1135.3 430.9L1133.9 435.6L1131.2 438.9L1129.8 438.4L1130.0 435.6 Z" transform="translate(-1098,-404)"/><path fill="#9a9a9a" stroke="#fff" stroke-width="0.5" stroke-linejoin="round" d="M34.78 20.06L36.10 20.59L35.63 22.94L34.21 22.93L33.55 23.92L34.10 25.23L32.11 26.56L31.11 25.55L29.94 25.78L29.41 27.10L27.06 26.63L27.07 25.21L26.08 24.55L24.77 25.10L23.44 23.11L24.45 22.11L24.22 20.94L22.90 20.41L23.37 18.06L24.79 18.07L25.45 17.08L24.90 15.77L26.89 14.44L27.89 15.45L29.06 15.22L29.59 13.90L31.94 14.37L31.93 15.79L32.92 16.45L34.23 15.90L35.56 17.89L34.55 18.89Z"/><circle cx="29.50" cy="20.50" r="2.40" fill="#fff"/><path fill="#9a9a9a" stroke="#fff" stroke-width="0.5" stroke-linejoin="round" d="M39.88 9.22L41.00 9.68L40.60 11.67L39.40 11.66L38.84 12.51L39.31 13.61L37.61 14.74L36.77 13.89L35.78 14.08L35.32 15.20L33.33 14.80L33.34 13.60L32.49 13.04L31.39 13.51L30.26 11.81L31.11 10.97L30.92 9.98L29.80 9.52L30.20 7.53L31.40 7.54L31.96 6.69L31.49 5.59L33.19 4.46L34.03 5.31L35.02 5.12L35.48 4.00L37.47 4.40L37.46 5.60L38.31 6.16L39.41 5.69L40.54 7.39L39.69 8.23Z"/><circle cx="35.40" cy="9.60" r="2.00" fill="#fff"/><path fill="#9a9a9a" stroke="#fff" stroke-width="0.5" stroke-linejoin="round" d="M45.29 17.67L46.20 18.07L45.86 19.78L44.87 19.79L44.38 20.52L44.75 21.44L43.30 22.41L42.59 21.72L41.73 21.89L41.33 22.80L39.62 22.46L39.61 21.47L38.88 20.98L37.96 21.35L36.99 19.90L37.68 19.19L37.51 18.33L36.60 17.93L36.94 16.22L37.93 16.21L38.42 15.48L38.05 14.56L39.50 13.59L40.21 14.28L41.07 14.11L41.47 13.20L43.18 13.54L43.19 14.53L43.92 15.02L44.84 14.65L45.81 16.10L45.12 16.81Z"/><circle cx="41.40" cy="18.00" r="1.70" fill="#fff"/></svg>
<svg class="a" style="left:346.00px;top:588.00px;" width="50" height="44" viewBox="0 0 50 44"><rect x="2.1" y="2.3" width="37.3" height="10.1" rx="2.6" fill="#1b78bd"/><rect x="5.2" y="5.4" width="2.8" height="3.8" fill="#fff"/><rect x="2.1" y="15.1" width="37.3" height="10.0" rx="2.6" fill="#1b78bd"/><rect x="5.2" y="18.2" width="2.8" height="3.8" fill="#fff"/><rect x="2.1" y="27.4" width="37.3" height="10.5" rx="2.6" fill="#1b78bd"/><rect x="5.2" y="30.8" width="2.8" height="3.8" fill="#fff"/><path fill="#a9bfdf" stroke="#fff" stroke-width="1.4" stroke-linejoin="round" d="M43.99 27.67L46.59 28.64L45.79 32.69L43.01 32.59L41.38 35.03L42.53 37.56L39.10 39.85L37.21 37.81L34.33 38.39L33.36 40.99L29.31 40.19L29.41 37.41L26.97 35.78L24.44 36.93L22.15 33.50L24.19 31.61L23.61 28.73L21.01 27.76L21.81 23.71L24.59 23.81L26.22 21.37L25.07 18.84L28.50 16.55L30.39 18.59L33.27 18.01L34.24 15.41L38.29 16.21L38.19 18.99L40.63 20.62L43.16 19.47L45.45 22.90L43.41 24.79Z"/><circle cx="33.80" cy="28.20" r="5.60" fill="#fff"/></svg>
<svg class="a" style="left:496.00px;top:586.00px;" width="50" height="46" viewBox="0 0 50 46"><rect x="2.1" y="2.7" width="36.2" height="10.0" rx="2.6" fill="#1b78bd"/><rect x="5.2" y="5.8" width="2.8" height="3.8" fill="#fff"/><rect x="2.1" y="14.9" width="36.2" height="9.5" rx="2.6" fill="#1b78bd"/><rect x="5.2" y="17.8" width="2.8" height="3.8" fill="#fff"/><rect x="2.1" y="27.1" width="36.2" height="9.5" rx="2.6" fill="#1b78bd"/><rect x="5.2" y="30.0" width="2.8" height="3.8" fill="#fff"/><circle cx="35.8" cy="33.3" r="11.4" fill="#17a279" stroke="#fff" stroke-width="1.6"/><path d="M35.8 26.3V40.3M28.8 33.3H42.8" stroke="#fff" stroke-width="2.8"/></svg>
<svg class="a" style="left:646.00px;top:594.00px;" width="50" height="34" viewBox="0 0 50 34"><g fill="#c8c8c8" opacity="0.85"><path d="M24.0 22.0L29.0 10.0L31.5 6.0L32.0 22.0"/><path d="M33.5 22.0L35.0 9.0L39.0 14.0L44.5 22.0"/></g><text x="3.0" y="29.2" font-family="Liberation Sans" font-style="italic" font-size="6.5" fill="#5a5a9a" letter-spacing="-0.3">php</text><text x="13.5" y="29.2" font-family="Liberation Sans" font-style="italic" font-weight="bold" font-size="8" fill="#f0a020" letter-spacing="-0.5">MyAdmin</text></svg>
<div class="t" style="left:801.5px;top:577.6px;font-family:'Liberation Serif',serif;font-weight:bold;font-size:57px;color:#000">R</div>
<svg class="a" style="left:346.00px;top:766.00px;" width="50" height="50" viewBox="0 0 50 50"><path fill="#e9d67a" d="M5.7 5.0H19.3L24.8 11.3H43.3V35.8H5.7Z"/><path fill="#ef6a5e" stroke="#fff" stroke-width="1.2" stroke-linejoin="round" d="M44.39 15.96L46.59 16.76L45.93 20.12L43.58 20.01L42.24 22.02L43.23 24.15L40.39 26.05L38.81 24.32L36.44 24.79L35.64 26.99L32.28 26.33L32.39 23.98L30.38 22.64L28.25 23.63L26.35 20.79L28.08 19.21L27.61 16.84L25.41 16.04L26.07 12.68L28.42 12.79L29.76 10.78L28.77 8.65L31.61 6.75L33.19 8.48L35.56 8.01L36.36 5.81L39.72 6.47L39.61 8.82L41.62 10.16L43.75 9.17L45.65 12.01L43.92 13.59Z"/><circle cx="36.00" cy="16.40" r="4.40" fill="#fff"/><path d="M370.5 801.8V808.5" stroke="#e07474" stroke-width="2" transform="translate(-346,-766)"/><path d="M348.7 810.3H392.0" stroke="#e07a7a" stroke-width="1.6" transform="translate(-346,-766)"/><rect x="365.9" y="807.4" width="9.2" height="5.8" rx="0.8" fill="#5ab98a" transform="translate(-346,-766)"/><text x="370.5" y="811.9" font-family="Liberation Sans" font-weight="bold" font-size="3.6" fill="#c9ecd6" text-anchor="middle" transform="translate(-346,-766)">FTP</text></svg>
<svg class="a" style="left:496.00px;top:766.00px;" width="50" height="50" viewBox="0 0 50 50"><path fill="#e9d67a" d="M5.7 5.0H19.3L24.8 11.3H43.3V35.8H5.7Z"/><circle cx="36.0" cy="15.8" r="10.6" fill="#15a17a" stroke="#fff" stroke-width="1.4"/><path d="M36.0 9.0V22.6M29.2 15.8H42.8" stroke="#fff" stroke-width="2.8"/><path d="M520.5 801.8V808.5" stroke="#e07474" stroke-width="2" transform="translate(-496,-766)"/><path d="M498.7 810.3H542.0" stroke="#e07a7a" stroke-width="1.6" transform="translate(-496,-766)"/><rect x="515.9" y="807.4" width="9.2" height="5.8" rx="0.8" fill="#5ab98a" transform="translate(-496,-766)"/><text x="520.5" y="811.9" font-family="Liberation Sans" font-weight="bold" font-size="3.6" fill="#c9ecd6" text-anchor="middle" transform="translate(-496,-766)">FTP</text></svg>
<svg class="a" style="left:646.00px;top:766.00px;" width="50" height="50" viewBox="0 0 50 50"><path fill="#e9d67a" d="M6.8 6.9H20.0L25.5 13.2H42.7V35.8H6.8Z"/><path fill="#ee6a5c" stroke="#fff" stroke-width="0.8" d="M675.1 773.2L682 780.4H678.8V785H671.5V780.4H668.4Z" transform="translate(-646,-766)"/><path fill="#55bd86" stroke="#fff" stroke-width="0.8" d="M681.5 782.5H688.4V787.3H691.8L685.2 794.8L678.6 787.3H681.5Z" transform="translate(-646,-766)"/><path d="M670.6 801.8V808.5" stroke="#e07474" stroke-width="2" transform="translate(-646,-766)"/><path d="M650.0 810.3H691.2" stroke="#e07a7a" stroke-width="1.6" transform="translate(-646,-766)"/><rect x="666.0" y="807.4" width="9.2" height="5.8" rx="0.8" fill="#5ab98a" transform="translate(-646,-766)"/><text x="670.6" y="811.9" font-family="Liberation Sans" font-weight="bold" font-size="3.6" fill="#c9ecd6" text-anchor="middle" transform="translate(-646,-766)">FTP</text></svg>
<div class="a" style="left:1236px;top:336px;width:434px;height:62px;background:#d9ecf6;border:1px solid #c4e3f0;border-radius:4px"></div>
<div class="t" style="left:1281.20px;top:360.16px;font-size:16px;font-weight:bold;color:#666">Want even more Stats ? <span style="color:#333">Try Pinguzo</span></div>
<svg class="a" style="left:1565px;top:359px" width="20" height="20" viewBox="0 0 20 20"><circle cx="10" cy="9.8" r="8.6" fill="#fff" opacity="0.9"/><circle cx="10" cy="9.8" r="7" fill="#3f86bd"/><circle cx="10" cy="9.8" r="4.8" fill="#2a0a6e"/><circle cx="11.6" cy="8" r="1.3" fill="#fff"/></svg><svg class="a" style="left:1637px;top:361.5px" width="14" height="12" viewBox="0 0 14 12"><path d="M1.2 0.8L12.8 11.2M12.8 0.8L1.2 11.2" stroke="#b3cbd8" stroke-width="1.6"/></svg>
<div class="a" style="left:1236px;top:424px;width:434px;height:495px;background:#fff;border:1px solid #dcdcdc"></div>
<div class="a" style="left:1237px;top:425px;width:432px;height:49px;background:#f5f5f5;border-bottom:1px solid #dcdcdc"></div>
<div class="t" style="left:1255.50px;top:442.06px;font-size:16px;font-weight:bold;color:#666">Server Status</div>
<div class="t" style="left:1250.00px;top:490.20px;font-size:15px;font-weight:bold;color:#111">Disk Usage</div>
<div class="t" style="left:1340.50px;top:490.20px;font-size:15px;color:#333">4.62 GB / 60 GB</div>
<div class="a" style="left:1250px;top:539px;width:407px;height:8px;background:#f5f5f5"></div>
<div class="a" style="left:1250px;top:539px;width:31px;height:8px;background:#df7462"></div>
<svg class="a" style="left:1245.2px;top:616.4px" width="104" height="104" viewBox="0 0 104 104"><g transform="rotate(-90 52 52)"><circle cx="52" cy="52" r="46.1" fill="none" stroke="#e9c042" stroke-width="7.2" stroke-dasharray="143.23 146.43" stroke-dashoffset="-0.80"/><circle cx="52" cy="52" r="46.1" fill="none" stroke="#afd6f3" stroke-width="7.2" stroke-dasharray="143.23 146.43" stroke-dashoffset="-145.63"/></g></svg>
<svg class="a" style="left:1401.0px;top:616.4px" width="104" height="104" viewBox="0 0 104 104"><g transform="rotate(-90 52 52)"><circle cx="52" cy="52" r="46.1" fill="none" stroke="#e9c042" stroke-width="7.2" stroke-dasharray="12.88 276.77" stroke-dashoffset="-0.80"/><circle cx="52" cy="52" r="46.1" fill="none" stroke="#afd6f3" stroke-width="7.2" stroke-dasharray="273.57 16.08" stroke-dashoffset="-15.28"/></g></svg>
<svg class="a" style="left:1558.0px;top:616.4px" width="104" height="104" viewBox="0 0 104 104"><g transform="rotate(-90 52 52)"><circle cx="52" cy="52" r="46.1" fill="none" stroke="#e9c042" stroke-width="7.2"/></g></svg>
<div class="t" style="left:1281.0px;top:588.40px;font-size:14.3px;font-weight:bold;color:#111">RAM</div>
<div class="t" style="left:1438.3px;top:588.40px;font-size:14.3px;font-weight:bold;color:#111">CPU</div>
<div class="t" style="left:1571.0px;top:587.80px;font-size:15px;font-weight:bold;color:#111">Bandwidth</div>
<div class="t" style="left:1280.5px;top:652.90px;font-size:15px;color:#222">50%</div>
<div class="t" style="left:1281.0px;top:673.86px;font-size:12.8px;color:#444">Used</div>
<div class="t" style="left:1438.5px;top:652.90px;font-size:15px;color:#222">5%</div>
<div class="t" style="left:1439.0px;top:673.86px;font-size:12.8px;color:#444">Used</div>
<div class="t" style="left:1589.5px;top:652.90px;font-size:15px;color:#222">100%</div>
<div class="t" style="left:1590.0px;top:673.86px;font-size:12.8px;color:#444">Used</div>
<svg class="a" style="left:0;top:0" width="1681" height="935" viewBox="0 0 1681 935"><path d="M1261 867L1261 865.5L1619.5 865.5L1632 744L1645.5 744L1645.5 867Z" fill="#b1d6f0"/><path d="M1261 865.5L1619.5 865.5L1632 744L1645.5 744" fill="none" stroke="#8eb6d8" stroke-width="2.6"/></svg>
<div class="t" style="left:1265.1px;top:875.84px;font-size:12px;color:#555">19:59:00</div>
<div class="t" style="left:1331.0px;top:875.84px;font-size:12px;color:#555">19:59:05</div>
<div class="t" style="left:1396.9px;top:875.84px;font-size:12px;color:#555">19:59:10</div>
<div class="t" style="left:1462.8px;top:875.84px;font-size:12px;color:#555">19:59:15</div>
<div class="t" style="left:1528.7px;top:875.84px;font-size:12px;color:#555">19:59:20</div>
<div class="t" style="left:1594.6px;top:875.84px;font-size:12px;color:#555">19:59:25</div>
</body></html>
